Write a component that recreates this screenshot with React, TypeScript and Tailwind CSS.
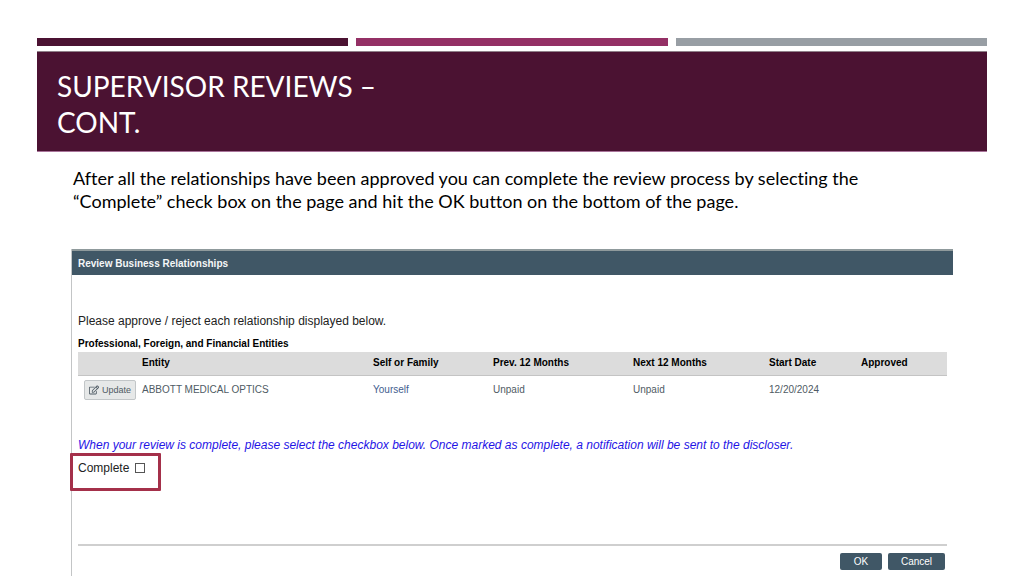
import { useState } from "react"
import { FaRegEdit } from "react-icons/fa"

type Relationship = {
  entity: string
  person: string
  previous: string
  next: string
  startDate: string
  approved: string
}

const relationships: Relationship[] = [
  {
    entity: "ABBOTT MEDICAL OPTICS",
    person: "Yourself",
    previous: "Unpaid",
    next: "Unpaid",
    startDate: "12/20/2024",
    approved: "",
  },
]

function SlideHeader() {
  return (
    <header>
      <div className="grid grid-cols-3 gap-2">
        <div className="h-2 bg-[#4b1232]" />
        <div className="h-2 bg-[#943065]" />
        <div className="h-2 bg-[#989ea4]" />
      </div>
      <div className="mt-[5px] flex h-[101px] items-center border-t border-b border-t-[#8f8089] border-b-[#a9749a] bg-[#4b1232] px-5 pt-1">
        <h1 className="font-[Lato,sans-serif] text-[28px] leading-9 text-white uppercase">
          Supervisor Reviews –
          <br />
          Cont.
        </h1>
      </div>
    </header>
  )
}

function RelationshipTable() {
  return (
    <table className="w-full table-fixed text-left text-[10px] leading-4">
      <caption className="text-left leading-4 font-bold text-black">
        Professional, Foreign, and Financial Entities
      </caption>
      <colgroup>
        <col className="w-16" />
        <col />
        <col className="w-[120px]" />
        <col className="w-[140px]" />
        <col className="w-[136px]" />
        <col className="w-[92px]" />
        <col className="w-[86px]" />
      </colgroup>
      <thead>
        <tr className="h-[23px] border-b border-[#c4c4c4] bg-[#dcdcdc] text-black">
          <td />
          <th>Entity</th>
          <th>Self or Family</th>
          <th>Prev. 12 Months</th>
          <th>Next 12 Months</th>
          <th>Start Date</th>
          <th>Approved</th>
        </tr>
      </thead>
      <tbody>
        {relationships.map((item) => (
          <tr key={item.entity} className="h-[30px] text-[#4f5b64]">
            <td className="pl-[6px]">
              <button
                type="button"
                className="flex h-5 w-[52px] items-center justify-center gap-[3px] rounded-[2px] border border-[#c2c6c8] bg-[#e6e8e8] text-[9px] text-[#4f5b64]"
              >
                <FaRegEdit className="size-[10px]" />
                Update
              </button>
            </td>
            <td>{item.entity}</td>
            <td>
              <a href="#yourself" className="text-[#43608f]">
                {item.person}
              </a>
            </td>
            <td>{item.previous}</td>
            <td>{item.next}</td>
            <td>{item.startDate}</td>
            <td>{item.approved}</td>
          </tr>
        ))}
      </tbody>
    </table>
  )
}

function ReviewPanel() {
  const [complete, setComplete] = useState(false)

  return (
    <section className="mx-[34px] mt-9 border-l border-[#c3c5c6] font-['Liberation_Sans',Arial,sans-serif]">
      <h2 className="flex h-[26px] items-center border-t-2 border-[#8f9a9c] bg-[#405766] pl-[6px] text-[10px] font-bold text-[#f4f6f7]">
        Review Business Relationships
      </h2>
      <div className="pr-[6px] pb-[6px] pl-[6px]">
        <p className="mt-[38px] mb-[7px] text-[12px] leading-4 text-[#222]">
          Please approve / reject each relationship displayed below.
        </p>
        <RelationshipTable />
        <p className="mt-8 text-[12px] leading-4 text-[#1f14e6] italic">
          When your review is complete, please select the checkbox below. Once marked as complete, a
          notification will be sent to the discloser.
        </p>
        <label className="-ml-2 flex h-[38px] w-[91px] items-start gap-[6px] rounded-[1px] border-3 border-[#a4304a] pt-1 pl-[5px] text-[12px] leading-4 text-[#222]">
          Complete
          <input
            type="checkbox"
            checked={complete}
            onChange={(e) => setComplete(e.target.checked)}
            className="mt-[3px] size-[10px] appearance-none border border-[#555] bg-white checked:bg-[#405766]"
          />
        </label>
        <div className="mt-[53px] flex justify-end gap-[6px] border-t-2 border-[#cfcfcf] pt-[7px] pr-[2px]">
          <button type="button" className="h-[17px] w-[42px] rounded-[2px] bg-[#405766] text-[10px] text-white">
            OK
          </button>
          <button type="button" className="h-[17px] w-[57px] rounded-[2px] bg-[#405766] text-[10px] text-white">
            Cancel
          </button>
        </div>
      </div>
    </section>
  )
}

export default function App() {
  return (
    <main className="bg-white px-[37px] pt-[38px]">
      <SlideHeader />
      <p className="mt-[15px] pr-[100px] pl-9 font-[Lato,sans-serif] text-[18px] leading-[23px] text-black [font-variant-ligatures:none]">
        After all the relationships have been approved you can complete the review process by selecting the
        “Complete” check box on the page and hit the OK button on the bottom of the page.
      </p>
      <ReviewPanel />
    </main>
  )
}
